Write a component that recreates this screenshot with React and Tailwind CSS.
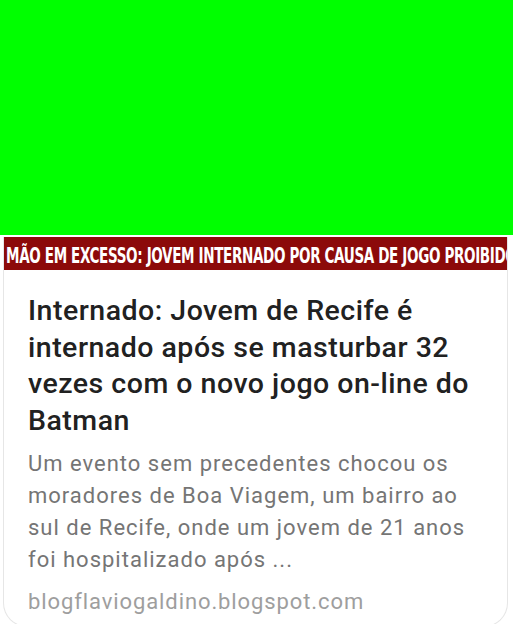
export default function App() {
  return (
    <div className="w-[513px] h-[624px] overflow-hidden bg-white" style={{ fontFamily: 'Roboto, "Noto Sans", sans-serif' }}>
      <div className="h-[235px] bg-[#00ff00]" />
      <div className="ml-[3px] mt-[2px] w-[505px] h-[390px] border-x border-b border-[#e6e6e6] rounded-b-[24px]">
        <div className="h-[33px] bg-[#8c0a0a] overflow-hidden flex items-center">
          <span
            className="block whitespace-nowrap text-white font-bold text-[22px] uppercase origin-left scale-x-[0.685] pl-[3px] pt-[3px] tracking-tight"
            style={{ fontFamily: '"DejaVu Sans Condensed", "DejaVu Sans", sans-serif' }}
          >
            Mão em excesso: jovem internado por causa de jogo proibido
          </span>
        </div>
        <div className="px-6 pt-[23px]">
          <h1 className="text-[28.5px] leading-[36.7px] font-medium tracking-[0.5px] text-[#212121]">
            Internado: Jovem de Recife é<br />
            internado após se masturbar 32<br />
            vezes com o novo jogo on-line do<br />
            Batman
          </h1>
          <p className="mt-[8px] text-[22px] leading-[32px] tracking-[1px] text-[#757575]">
            Um evento sem precedentes chocou os<br />
            moradores de Boa Viagem, um bairro ao<br />
            sul de Recife, onde um jovem de 21 anos<br />
            foi hospitalizado após ...
          </p>
          <p className="mt-[11px] text-[22px] leading-[30px] tracking-[0.9px] text-[#9e9e9e]">blogflaviogaldino.blogspot.com</p>
        </div>
      </div>
    </div>
  );
}
